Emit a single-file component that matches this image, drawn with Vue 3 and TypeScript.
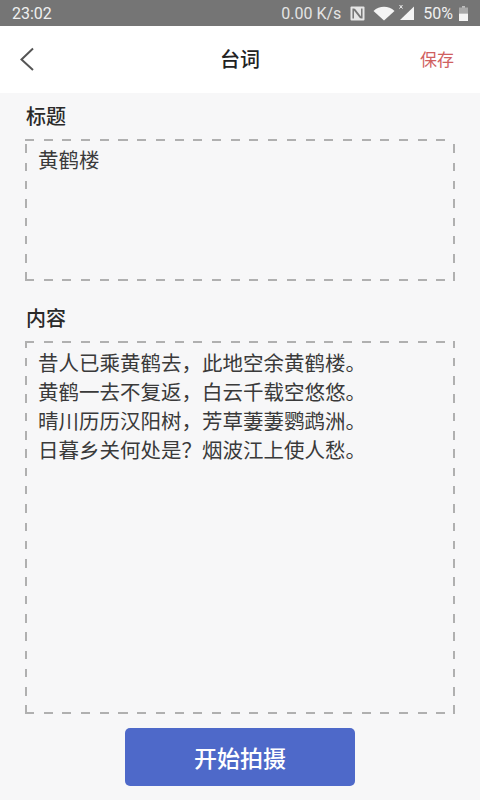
<script setup lang="ts">
const comma = '\uFF0C'
const question = '\uFF1F'
const period = '\u3002'
const lines: string[] = [
  `昔人已乘黄鹤去${comma}此地空余黄鹤楼${period}`,
  `黄鹤一去不复返${comma}白云千载空悠悠${period}`,
  `晴川历历汉阳树${comma}芳草萋萋鹦鹉洲${period}`,
  `日暮乡关何处是${question}烟波江上使人愁${period}`,
]
</script>

<template>
  <div class="page">
    <div class="status">
      <span class="time">23:02</span>
      <div class="status-right">
        <span class="speed">0.00 K/s</span>
        <svg class="nfc" width="15" height="15" viewBox="0 0 15 15">
          <rect x="0.5" y="0.5" width="14" height="14" rx="1" fill="#e6e6e6" />
          <path d="M3.2 12.5V2.5M11.8 12.5V2.5" fill="none" stroke="#757575" stroke-width="1.5" />
          <path d="M4 3L11 12" fill="none" stroke="#757575" stroke-width="2" />
        </svg>
        <svg class="wifi" width="22" height="15" viewBox="0 0 22 15">
          <path d="M0.5 5C6.5 -0.6 15.5 -0.6 21.5 5L11 14.5Z" fill="#f4f4f4" />
        </svg>
        <svg class="signal" width="17" height="18" viewBox="0 0 17 18">
          <path d="M16 2.5V16H2Z" fill="#f4f4f4" />
          <path d="M1.5 1L4.5 4.5M4.5 1L1.5 4.5" stroke="#f4f4f4" stroke-width="1" />
        </svg>
        <span class="pct">50%</span>
        <svg class="battery" width="9" height="15" viewBox="0 0 9 15">
          <rect x="3" y="0" width="3" height="2" fill="#bdbdbd" />
          <rect x="0" y="1.5" width="9" height="6" fill="#a8a8a8" />
          <rect x="0" y="7.5" width="9" height="7.5" fill="#f4f4f4" />
        </svg>
      </div>
    </div>

    <header class="header">
      <svg class="back" width="16" height="24" viewBox="0 0 16 24">
        <path d="M14 1.5L2.5 12.5L14 23" fill="none" stroke="#555" stroke-width="2" />
      </svg>
      <span class="title">台词</span>
      <span class="save">保存</span>
    </header>

    <main class="body">
      <div class="label first">标题</div>
      <div class="box title-box">黄鹤楼</div>
      <div class="label second">内容</div>
      <div class="box content-box">
        <div v-for="line in lines" :key="line">{{ line }}</div>
      </div>
      <div class="actions">
        <button class="start" type="button">开始拍摄</button>
      </div>
    </main>
  </div>
</template>

<style scoped>
.page {
  width: 480px;
  height: 800px;
  display: flex;
  flex-direction: column;
  background: #f7f7f8;
  overflow: hidden;
  font-family: "Noto Sans CJK SC", "Noto Sans", sans-serif;
}
.status {
  height: 26px;
  background: #757575;
  color: #f0f0f0;
  display: flex;
  align-items: center;
  justify-content: space-between;
  padding: 0 12px 0 12px;
  font-family: Roboto, "Noto Sans", sans-serif;
  font-size: 16px;
  box-sizing: border-box;
}
.status-right {
  display: flex;
  align-items: center;
}
.speed { color: #e4e4e4; }
.nfc { margin-left: 9px; }
.wifi { margin-left: 8px; }
.signal { margin-left: 3px; }
.pct { margin-left: 8px; }
.battery { margin-left: 6px; }
.header {
  height: 67px;
  background: #fff;
  display: flex;
  align-items: center;
  justify-content: center;
  position: relative;
}
.back {
  position: absolute;
  left: 19px;
  top: 21px;
}
.title {
  font-size: 20px;
  font-weight: 500;
  color: #222;
  line-height: 26px;
  margin-bottom: 2px;
}
.save {
  position: absolute;
  right: 26px;
  top: 21px;
  font-size: 17px;
  line-height: 24px;
  color: #d0605f;
}
.body {
  flex: 1;
  display: flex;
  flex-direction: column;
  padding: 0 25px;
}
.label {
  font-size: 20px;
  font-weight: 500;
  color: #2a2a2a;
  line-height: 26px;
  padding-left: 1px;
}
.label.first { margin-top: 10px; margin-bottom: 10px; }
.label.second { margin-top: 24px; margin-bottom: 10px; }
.box {
  box-sizing: border-box;
  width: 430px;
  padding: 7px 13px;
  font-size: 20.5px;
  line-height: 29px;
  color: #3a3a3a;
  background-image:
    repeating-linear-gradient(90deg, #b0b0b0 0 9px, transparent 9px 18.7px),
    repeating-linear-gradient(90deg, #b0b0b0 0 9px, transparent 9px 18.7px),
    repeating-linear-gradient(0deg, #b0b0b0 0 8.5px, transparent 8.5px 18.3px),
    repeating-linear-gradient(0deg, #b0b0b0 0 8.5px, transparent 8.5px 18.3px);
  background-size: 100% 2px, 100% 2px, 2px 100%, 2px 100%;
  background-position: 0 0, 0 100%, 0 0, 100% 0;
  background-repeat: no-repeat;
}
.title-box { height: 142px; padding-top: 6px; }
.content-box { height: 373px; }
.actions {
  display: flex;
  justify-content: center;
  margin-top: 14px;
}
.start {
  width: 230px;
  height: 58px;
  border: none;
  border-radius: 5px;
  background: #4e69c9;
  color: #fff;
  font-family: inherit;
  font-size: 23px;
  font-weight: 500;
  padding: 0;
}
</style>
